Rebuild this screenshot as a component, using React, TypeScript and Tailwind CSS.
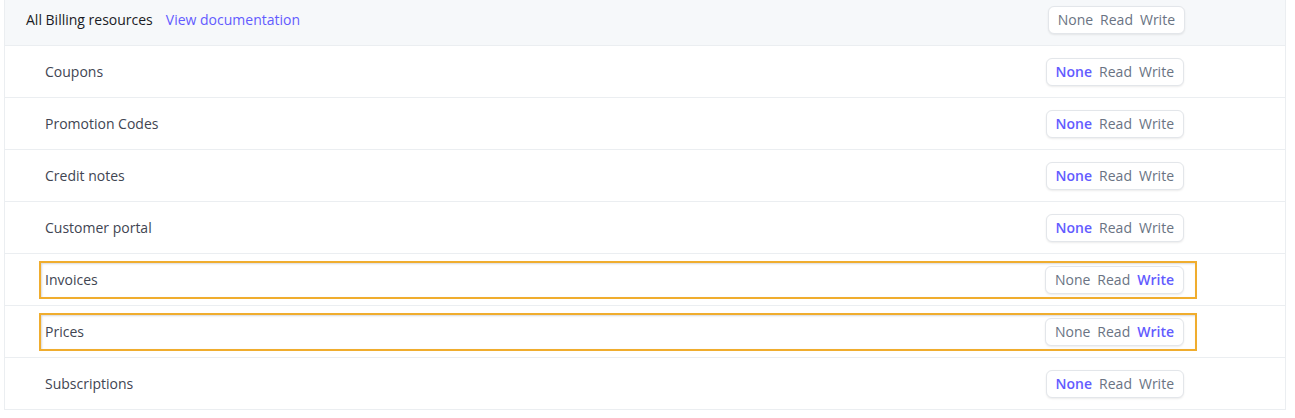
import React from 'react';

type Level = 'none' | 'read' | 'write';

type Resource = {
  name: string;
  level: Level;
  highlighted?: boolean;
};

const resources: Resource[] = [
  { name: 'Coupons', level: 'none' },
  { name: 'Promotion Codes', level: 'none' },
  { name: 'Credit notes', level: 'none' },
  { name: 'Customer portal', level: 'none' },
  { name: 'Invoices', level: 'write', highlighted: true },
  { name: 'Prices', level: 'write', highlighted: true },
  { name: 'Subscriptions', level: 'none' },
];

const PermissionToggle = ({ level }: { level?: Level }) => {
  const item = (value: Level, label: string) => (
    <span
      className={
        level === value
          ? 'font-semibold text-[#635bff]'
          : 'text-[#6a7383]'
      }
    >
      {label}
    </span>
  );

  return (
    <div className="flex h-[28px] items-center gap-[7px] rounded-md border border-[#e3e6ea] bg-white px-[9px] shadow-[0_1px_2px_rgba(0,0,0,0.08)]">
      {item('none', 'None')}
      {item('read', 'Read')}
      {item('write', 'Write')}
    </div>
  );
};

const App = () => {
  return (
    <div
      className="min-h-[418px] bg-white text-[14px] text-[#414552]"
      style={{ fontFamily: '"Open Sans", sans-serif' }}
    >
      <div className="ml-[4px] w-[1282px] border-x border-[#ebeef1]">
        <div className="flex h-[46px] items-center justify-between border-b border-[#ebeef1] bg-[#f6f8fa] pb-[6px] pl-[21px] pr-[100px]">
          <div className="flex items-center gap-[13px]">
            <span className="text-[#1a1b25]">All Billing resources</span>
            <a className="font-medium text-[#635bff]" href="#">
              View documentation
            </a>
          </div>
          <PermissionToggle />
        </div>

        {resources.map((r) => (
          <div
            key={r.name}
            className="flex h-[52px] items-center border-b border-[#ebeef1] pl-[34px] pr-[88px]"
          >
            <div
              className={
                'flex h-[38px] flex-1 items-center justify-between border-2 pl-[4px] pr-[11px] ' +
                (r.highlighted
                  ? 'border-[#f0ad2e] shadow-[inset_1px_1px_2px_rgba(0,0,0,0.15)]'
                  : 'border-transparent')
              }
            >
              <span>{r.name}</span>
              <PermissionToggle level={r.level} />
            </div>
          </div>
        ))}
      </div>
    </div>
  );
};

export default App;
